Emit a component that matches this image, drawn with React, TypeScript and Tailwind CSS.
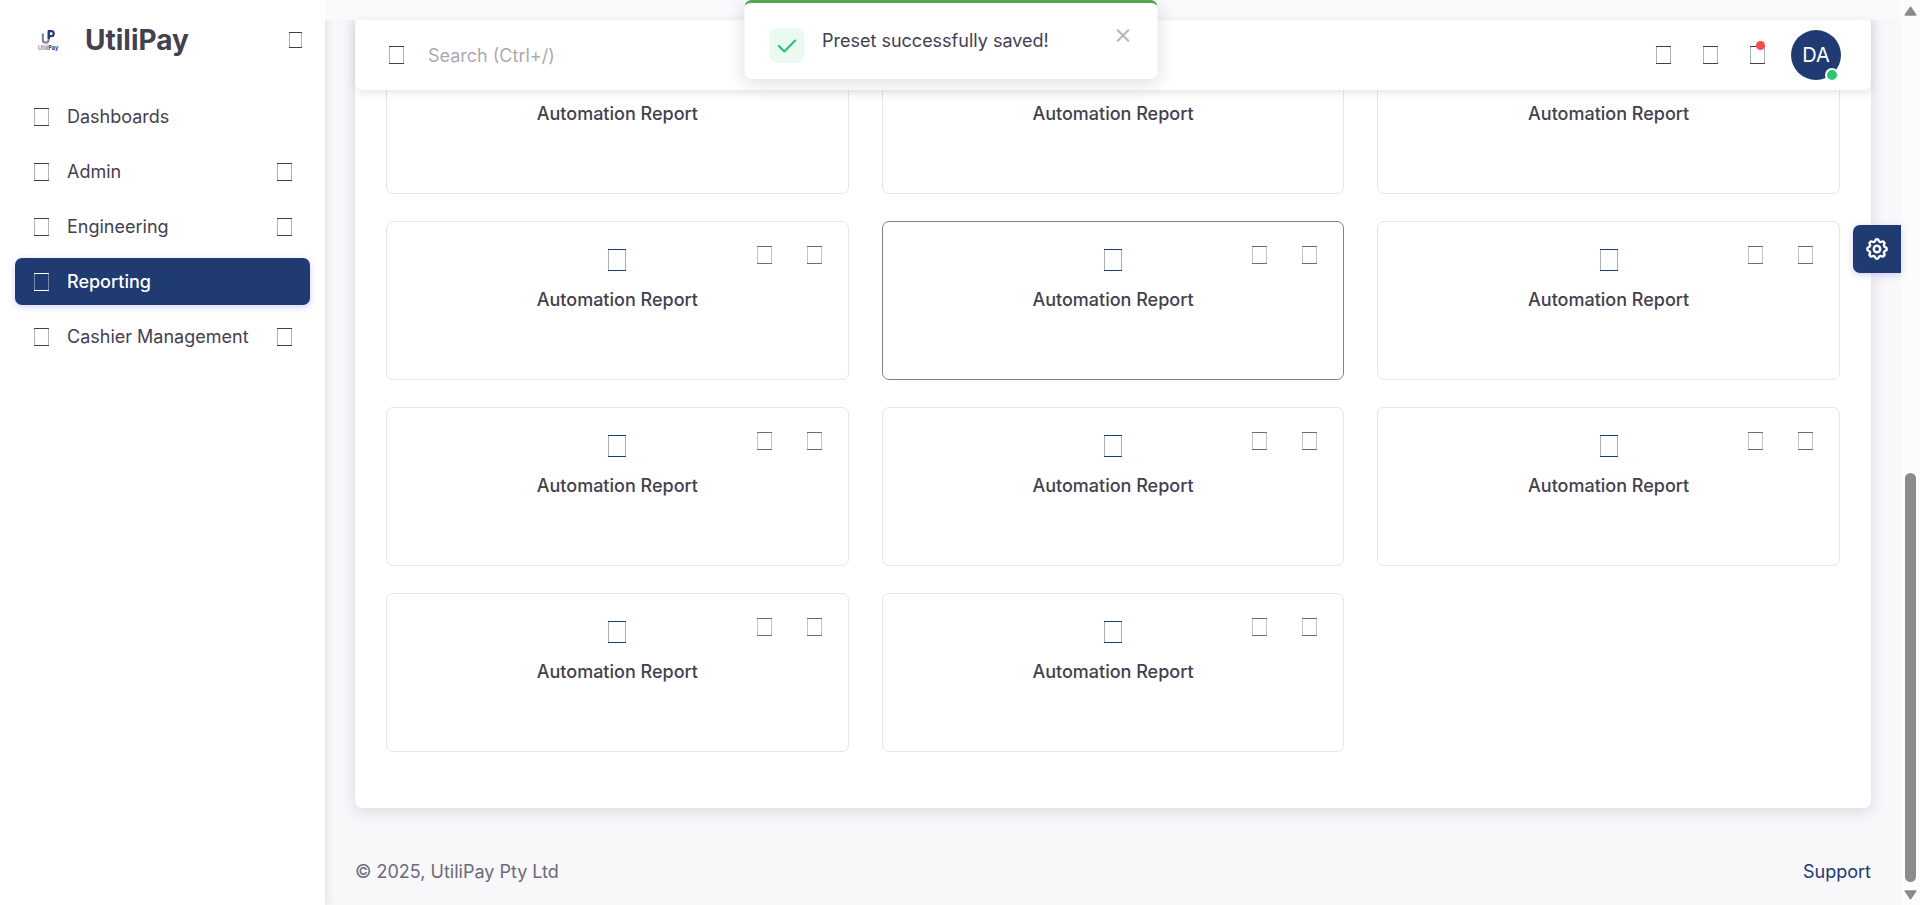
import type { ReactNode } from "react";
import { TbCheck, TbSettings, TbX } from "react-icons/tb";

type GlyphSize = "sm" | "md" | "lg";

const glyphSizes: Record<GlyphSize, string> = {
  sm: "h-4 w-[13px]",
  md: "h-[18px] w-[15px]",
  lg: "h-[22px] w-[18px]",
};

function Glyph({ size = "md" }: { size?: GlyphSize }) {
  return (
    <span aria-hidden="true" className={`relative block shrink-0 border-y border-current ${glyphSizes[size]}`}>
      <span className="absolute inset-0 border-x border-current opacity-40" />
    </span>
  );
}

const navItems = [
  { label: "Dashboards", expandable: false, active: false },
  { label: "Admin", expandable: true, active: false },
  { label: "Engineering", expandable: true, active: false },
  { label: "Reporting", expandable: false, active: true },
  { label: "Cashier Management", expandable: true, active: false },
];

function Logo() {
  return (
    <svg viewBox="0 0 20 23" className="h-[23px] w-5 shrink-0 overflow-visible" role="img" aria-label="UtiliPay logo">
      <path d="M4.8 4.500v6.200a2.900 2.900 0 0 0 5.800 0V3" fill="none" stroke="#74809c" strokeWidth="2" />
      <path d="M10.800 10V2.200h2.400a2.500 2.500 0 0 1 0 5h-2.200" fill="none" stroke="#203a72" strokeWidth="2.200" />
      <text x="0" y="21" fontSize="5.5" fontWeight="600" fontFamily="Inter, sans-serif" fill="#74809c">
        Utili
        <tspan fill="#203a72" fontWeight="700">Pay</tspan>
      </text>
    </svg>
  );
}

function Sidebar() {
  return (
    <aside className="z-10 flex w-[325px] shrink-0 flex-col bg-white shadow-[0_2px_10px_rgba(47,43,61,0.14)]">
      <div className="flex h-20 items-center pr-[23px] pl-[38px]">
        <Logo />
        <span className="ml-[27px] flex-1 text-[28px] leading-8 font-bold">UtiliPay</span>
        <button type="button" aria-label="Pin menu">
          <Glyph size="sm" />
        </button>
      </div>
      <nav className="flex flex-col gap-2 px-[15px] pt-[13px]">
        {navItems.map((item) => (
          <a
            key={item.label}
            href="#"
            className={
              item.active
                ? "flex h-[47px] items-center rounded-[7px] bg-[#203a72] pr-[18px] pl-[19px] font-medium text-white shadow-[0_2px_7px_rgba(115,103,240,0.3)]"
                : "flex h-[47px] items-center rounded-[7px] pr-[18px] pl-[19px]"
            }
          >
            <Glyph />
            <span className="ml-[18px] flex-1 whitespace-nowrap">{item.label}</span>
            {item.expandable && <Glyph />}
          </a>
        ))}
      </nav>
    </aside>
  );
}

function IconButton({ label, children }: { label: string; children: ReactNode }) {
  return (
    <button type="button" aria-label={label} className="relative">
      {children}
    </button>
  );
}

function TopBar() {
  return (
    <div className="absolute inset-x-0 top-0 z-10 bg-linear-to-b from-[#faf9fc] from-[20px] to-transparent to-[20px] px-[30px] pt-5">
      <header className="flex h-[70px] items-center rounded-[7px] bg-white pr-[30px] pl-[34px] shadow-[0_2px_10px_rgba(47,43,61,0.14)]">
        <Glyph />
        <input
          type="search"
          aria-label="Search"
          placeholder="Search (Ctrl+/)"
          className="ml-6 min-w-0 flex-1 bg-transparent outline-none placeholder:text-[#acaab1]"
        />
        <div className="flex items-center gap-8">
          <IconButton label="Theme">
            <Glyph />
          </IconButton>
          <IconButton label="Shortcuts">
            <Glyph />
          </IconButton>
          <IconButton label="Notifications">
            <Glyph />
            <span className="absolute -top-[5px] right-0 size-[9px] rounded-full bg-[#ff4c51]" />
          </IconButton>
        </div>
        <button
          type="button"
          aria-label="Account"
          className="relative ml-[26px] size-[50px] rounded-full bg-[#203a72] text-xl text-white"
        >
          DA
          <span className="absolute right-[2px] -bottom-[2px] size-[14px] rounded-full border-2 border-white bg-[#28c76f]" />
        </button>
      </header>
    </div>
  );
}

function ReportCard({ highlighted }: { highlighted: boolean }) {
  return (
    <article
      className={
        highlighted
          ? "relative flex h-[159px] flex-col items-center rounded-[7px] border border-[#82808b] pt-[27px]"
          : "relative flex h-[159px] flex-col items-center rounded-[7px] border border-[#e6e6e8] pt-[27px]"
      }
    >
      <span className="text-[#203a72]">
        <Glyph size="lg" />
      </span>
      <h3 className="mt-[15px] font-medium">Automation Report</h3>
      <div className="absolute top-6 right-[26px] flex gap-[35px] text-[#6d6b77]">
        <button type="button" aria-label="Edit report">
          <Glyph />
        </button>
        <button type="button" aria-label="More actions">
          <Glyph />
        </button>
      </div>
    </article>
  );
}

function Toast() {
  return (
    <div
      role="status"
      className="absolute top-0 left-1/2 z-20 flex h-[79px] w-[413px] -translate-x-1/2 items-start rounded-[7px] border-t-3 border-[#53a653] bg-white pr-6 pl-[25px] shadow-[0_4px_18px_rgba(47,43,61,0.16)]"
    >
      <span className="mt-[25px] flex size-[35px] items-center justify-center rounded-lg bg-[#ebfaf1] text-[#28c76f]">
        <TbCheck className="size-[26px]" />
      </span>
      <p className="mt-6 ml-[18px] flex-1 whitespace-nowrap">Preset successfully saved!</p>
      <button type="button" aria-label="Close" className="mt-[22px] text-[#bab8c0]">
        <TbX className="size-[21px]" strokeWidth={2.5} />
      </button>
    </div>
  );
}

function ScrollTrack() {
  return (
    <div aria-hidden="true" className="flex w-[19px] shrink-0 flex-col items-center bg-[#fcfcfc] text-[#8b8b8b]">
      <svg viewBox="0 0 13 10" className="mt-[6px] h-[10px] w-[13px]">
        <path d="M6.500 1.200 11.800 9H1.200Z" fill="currentColor" stroke="currentColor" strokeLinejoin="round" strokeWidth="1.400" />
      </svg>
      <div className="flex-[457]" />
      <div className="w-[11px] flex-[409] rounded-full bg-[#8b8b8b]" />
      <svg viewBox="0 0 13 10" className="mt-2 mb-[5px] h-[10px] w-[13px]">
        <path d="M6.500 8.800 11.800 1H1.200Z" fill="currentColor" stroke="currentColor" strokeLinejoin="round" strokeWidth="1.400" />
      </svg>
    </div>
  );
}

export default function App() {
  return (
    <div className="flex h-screen overflow-hidden bg-[#f8f7fa] font-[Inter,sans-serif] text-[18px] leading-[27px] text-[#444050]">
      <div className="relative flex min-w-0 flex-1">
        <Sidebar />
        <div className="relative flex min-w-0 flex-1 flex-col justify-end overflow-hidden">
          <TopBar />
          <main className="px-[30px]">
            <section className="grid grid-cols-3 gap-x-[33px] gap-y-[27px] rounded-[7px] bg-white px-[31px] pt-[60px] pb-14 shadow-[0_4px_15px_rgba(47,43,61,0.14)]">
              {Array.from({ length: 11 }, (_, index) => (
                <ReportCard key={index} highlighted={index === 4} />
              ))}
            </section>
          </main>
          <footer className="flex justify-between px-[30px] pt-[50px] pb-5 text-[#6d6b77]">
            <span>© 2025, UtiliPay Pty Ltd</span>
            <a href="#" className="text-[#203a72]">
              Support
            </a>
          </footer>
        </div>
        <Toast />
        <button
          type="button"
          aria-label="Customize"
          className="absolute top-[225px] right-0 z-20 flex size-12 items-center justify-center rounded-l-[7px] bg-[#203a72] text-white shadow-[0_2px_7px_rgba(115,103,240,0.3)]"
        >
          <TbSettings className="size-[26px]" strokeWidth={2.2} />
        </button>
      </div>
      <ScrollTrack />
    </div>
  );
}
